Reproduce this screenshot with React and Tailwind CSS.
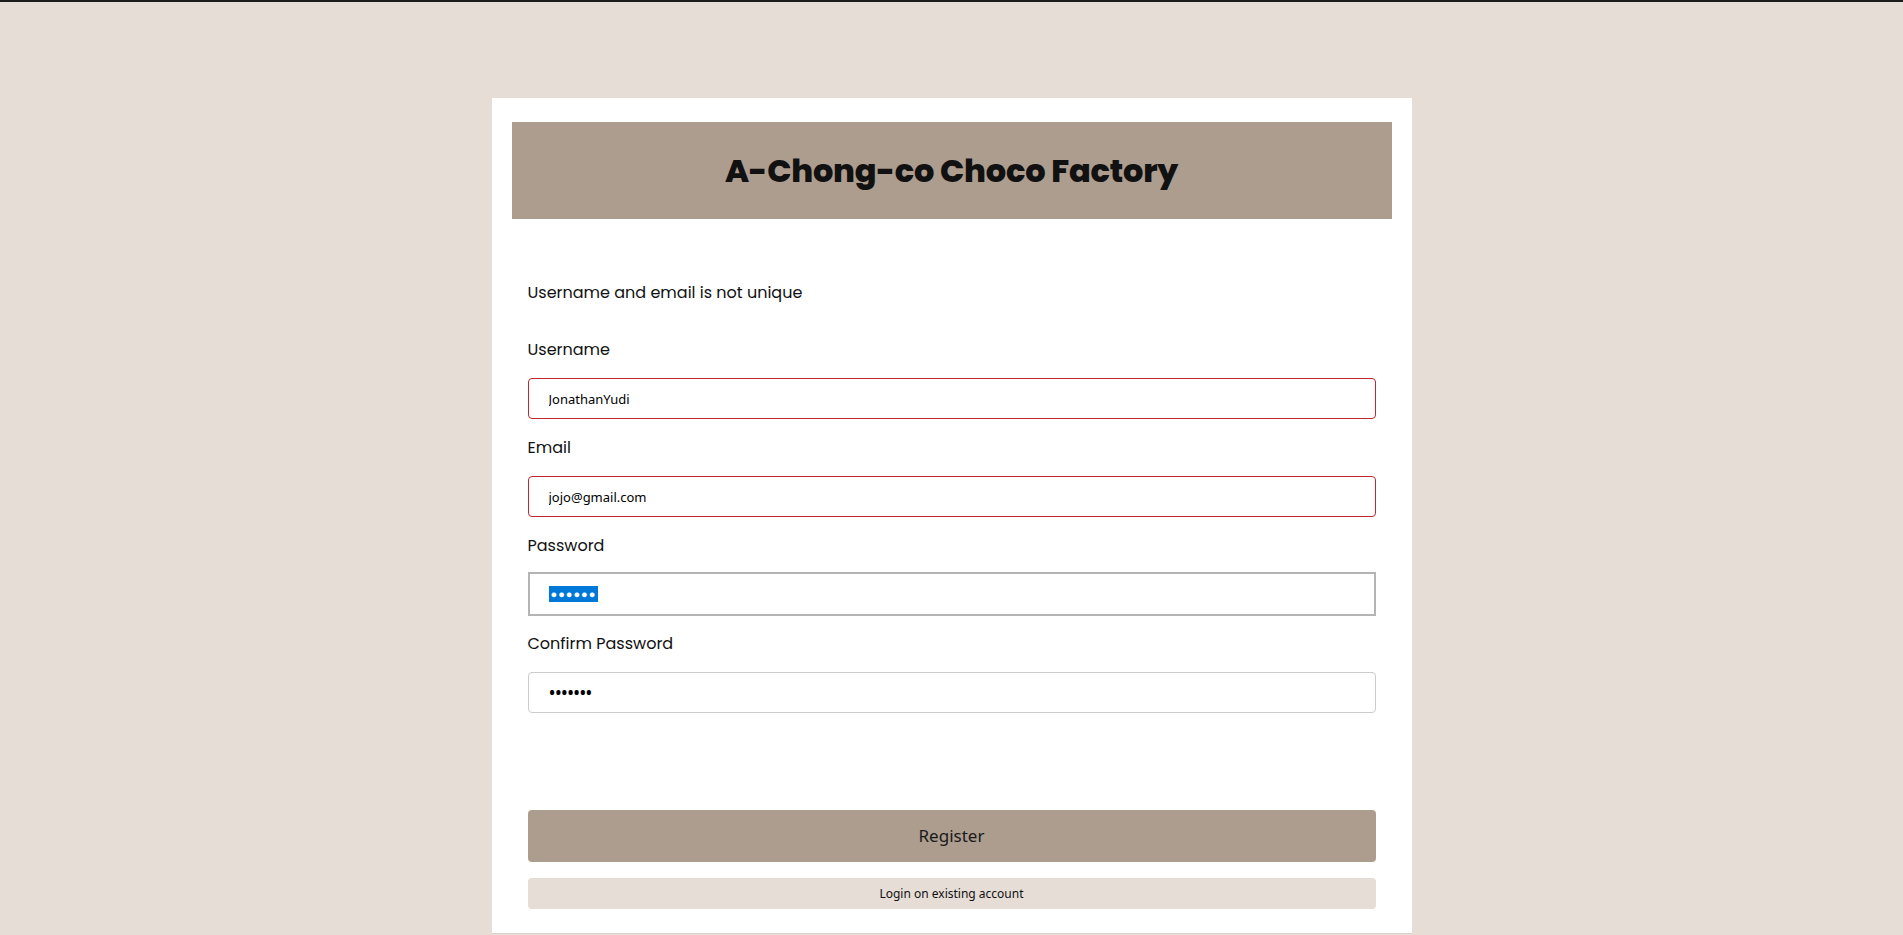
import React from 'react';

const labelCls = "block text-[16px] leading-6 text-[#111]";
const fieldFont = { fontFamily: '"Noto Sans", Tahoma, sans-serif' };

function Field({ label, value, invalid, type = "text" }) {
    return (
        <div className="mb-[17px]">
            <label className={labelCls}>{label}</label>
            <input
                type={type}
                defaultValue={value}
                readOnly
                style={fieldFont}
                className={
                    "mt-4 block w-full h-[41px] rounded px-5 text-black bg-white outline-none " +
                    (type === "password" ? "text-[19px] tracking-[-1px] " : "text-[13px] ") +
                    (invalid ? "border border-[#c0262d]" : "border border-[#cccccc]")
                }
            />
        </div>
    );
}

export default function App() {
    return (
        <div
            className="min-h-[935px] bg-[#e5ddd6] border-t-2 border-[#1c1c1c]"
            style={{ fontFamily: 'Poppins, Inter, "Open Sans", sans-serif' }}
        >
            <div className="mx-auto mt-[96px] w-[920px] min-h-[835px] bg-white px-5 pt-6 pb-[5px] shadow-[0_1px_0_#d8d2cc]">
                <div className="h-[97px] bg-[#ad9d8f] flex items-center justify-center">
                    <h1 className="text-[32px] font-extrabold tracking-[-0.2px] text-[#111]">
                        A-Chong-co Choco Factory
                    </h1>
                </div>

                <form className="px-4 pt-[62px]" onSubmit={(e) => e.preventDefault()}>
                    <p className="text-[16px] leading-6 text-[#111] mb-[33px]">
                        Username and email is not unique
                    </p>

                    <Field label="Username" value="JonathanYudi" invalid />
                    <Field label="Email" value="jojo@gmail.com" invalid />

                    <div className="mb-[16px]">
                        <label className={labelCls}>Password</label>
                        <div className="mt-[14px] h-[44px] w-full border-2 border-[#b4b4b4] bg-white flex items-center px-[19px]">
                            <span
                                className="bg-[#0078d7] text-white text-[11px] leading-4 h-4 px-[2px] tracking-[1px]"
                                style={fieldFont}
                            >
                                ●●●●●●
                            </span>
                        </div>
                    </div>

                    <Field label="Confirm Password" value="1234567" type="password" />

                    <button
                        type="submit"
                        style={fieldFont}
                        className="mt-[97px] block w-full h-[52px] rounded bg-[#ad9d8f] text-[17px] text-[#1a1a1a]"
                    >
                        Register
                    </button>
                    <button
                        type="button"
                        style={fieldFont}
                        className="mt-4 block w-full h-[31px] rounded-sm bg-[#e5ddd6] text-[12px] text-[#111]"
                    >
                        Login on existing account
                    </button>
                </form>
            </div>
        </div>
    );
}
